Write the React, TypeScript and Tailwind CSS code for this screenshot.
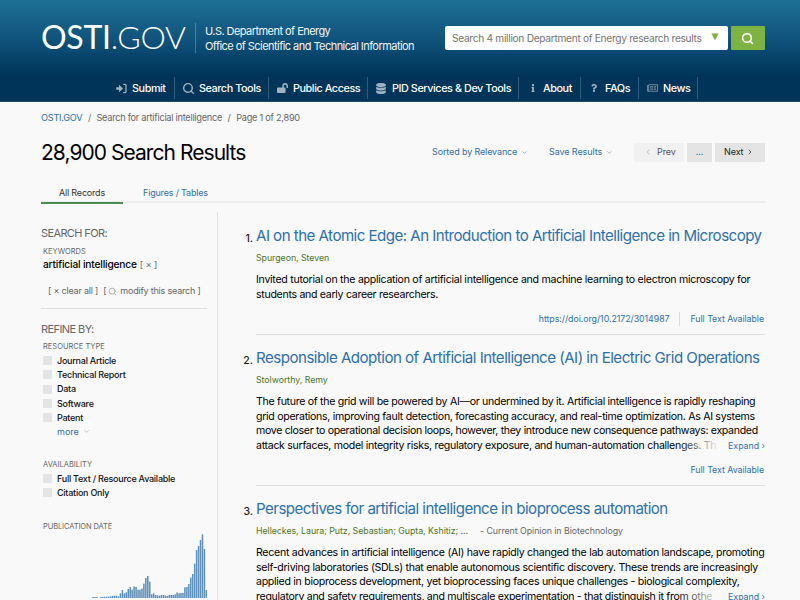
import React from 'react';
import { ChevronDown, ChevronLeft, ChevronRight, Search } from 'lucide-react';
import { FaDatabase, FaInfo, FaLockOpen, FaQuestion, FaRegNewspaper } from 'react-icons/fa';

interface Result {
  title: string;
  titleClass: string;
  authors: string;
  journal?: string;
  lines: { text: string; className: string }[];
  expand?: boolean;
  doi?: string;
}

const results: Result[] = [
  {
    title: 'AI on the Atomic Edge: An Introduction to Artificial Intelligence in Microscopy',
    titleClass: 'tracking-[-0.53px]',
    authors: 'Spurgeon, Steven',
    lines: [
      { text: 'Invited tutorial on the application of artificial intelligence and machine learning to electron microscopy for', className: 'tracking-[-0.28px]' },
      { text: 'students and early career researchers.', className: 'tracking-[-0.31px]' },
    ],
    doi: 'https://doi.org/10.2172/3014987',
  },
  {
    title: 'Responsible Adoption of Artificial Intelligence (AI) in Electric Grid Operations',
    titleClass: 'tracking-[-0.51px]',
    authors: 'Stolworthy, Remy',
    lines: [
      { text: 'The future of the grid will be powered by AI—or undermined by it. Artificial intelligence is rapidly reshaping', className: 'tracking-[-0.31px]' },
      { text: 'grid operations, improving fault detection, forecasting accuracy, and real-time optimization. As AI systems', className: 'tracking-[-0.3px]' },
      { text: 'move closer to operational decision loops, however, they introduce new consequence pathways: expanded', className: 'tracking-[-0.34px]' },
      { text: 'attack surfaces, model integrity risks, regulatory exposure, and human-automation challenges. Th', className: 'tracking-[-0.31px]' },
    ],
    expand: true,
  },
  {
    title: 'Perspectives for artificial intelligence in bioprocess automation',
    titleClass: 'tracking-[-0.54px]',
    authors: 'Helleckes, Laura; Putz, Sebastian; Gupta, Kshitiz; ...',
    journal: '- Current Opinion in Biotechnology',
    lines: [
      { text: 'Recent advances in artificial intelligence (AI) have rapidly changed the lab automation landscape, promoting', className: 'tracking-[-0.29px]' },
      { text: 'self-driving laboratories (SDLs) that enable autonomous scientific discovery. These trends are increasingly', className: 'tracking-[-0.3px]' },
      { text: 'applied in bioprocess development, yet bioprocessing faces unique challenges - biological complexity,', className: 'tracking-[-0.3px]' },
      { text: 'regulatory and safety requirements, and multiscale experimentation - that distinguish it from othe', className: 'tracking-[-0.3px]' },
    ],
    expand: true,
  },
];

const resourceTypes = ['Journal Article', 'Technical Report', 'Data', 'Software', 'Patent'];

const publications = [
  3, 3, 3, 0, 3, 3, 4, 4, 4, 5, 6, 7, 7, 5, 14, 24, 14, 17, 27, 33, 25, 35, 33, 25, 25, 28, 43, 60, 66, 49,
  11, 14, 9, 8, 7, 9, 9, 7, 6, 9, 9, 9, 11, 16, 14, 15, 15, 32, 33, 42, 61, 72, 103, 144, 156, 174, 191, 147, 24,
];

const SubmitIcon = () => (
  <svg viewBox="0 0 12 12" className="h-[11px] w-[11px] shrink-0">
    <path d="M0.3 4.6h3V2L7.7 6 3.3 10V7.4h-3z" fill="currentColor" />
    <path d="M7.8 1.6h2.1a1 1 0 0 1 1 1v6.8a1 1 0 0 1-1 1H7.8" fill="none" stroke="currentColor" strokeWidth="1.4" />
  </svg>
);

const navItems = [
  { label: 'Submit', width: 'w-[67px]', icon: <SubmitIcon /> },
  { label: 'Search Tools', width: 'w-[94px]', icon: <Search className="-ml-[1px] h-[13px] w-[13px]" strokeWidth={2.6} /> },
  { label: 'Public Access', width: 'w-[99px]', icon: <FaLockOpen className="h-[10px] w-[11px]" /> },
  { label: 'PID Services & Dev Tools', width: 'w-[151px]', icon: <FaDatabase className="h-[11px] w-[10px]" /> },
  { label: 'About', width: 'w-[62px]', icon: <FaInfo className="ml-[1px] h-[8px] w-[10px]" /> },
  { label: 'FAQs', width: 'w-[58px]', icon: <FaQuestion className="h-[8px] w-[10px]" /> },
  { label: 'News', width: 'w-[59px]', icon: <FaRegNewspaper className="h-[10px] w-[11px] opacity-70" /> },
];

function Header() {
  return (
    <header className="h-[102px] shrink-0 border-b border-[#1f4c6e] bg-linear-to-b from-[#1e7095] via-[#10527a] via-40% to-[#003459] to-75%">
      <div className="flex h-[76px] items-center pl-[41px]">
        <div className="flex w-[154px] items-baseline pb-[2px] font-['Lato'] text-[32px] leading-[32px] tracking-[-0.25px] text-white">
          <span>OSTI</span>
          <span className="font-light">.GOV</span>
        </div>
        <div className="flex h-[30px] w-[250px] flex-col justify-center border-l border-white/25 pt-[1px] pl-[9px] text-[11px] leading-[15px] tracking-[-0.55px] text-[#f2f6f9]">
          <span>U.S. Department of Energy</span>
          <span>Office of Scientific and Technical Information</span>
        </div>
        <div className="flex h-[24px] w-[283px] items-center justify-between rounded-[2px] bg-white pr-[9px] pl-[7px] text-[10.2px] tracking-[-0.31px] text-[#757575]">
          <span className="pt-[1px]">Search 4 million Department of Energy research results</span>
          <svg viewBox="0 0 8 8" className="mb-[2px] h-[8px] w-[8px]">
            <path d="M0.4 0.5h7.2L4 7.5z" fill="#7cb342" />
          </svg>
        </div>
        <button className="ml-[3px] flex h-[24px] w-[34px] items-center justify-center rounded-[1px] bg-[#7cb342] pr-[2px] text-white">
          <Search className="h-[13px] w-[13px]" strokeWidth={3} />
        </button>
      </div>
      <nav className="flex h-[25px] pt-[1px] pl-[108px]">
        {navItems.map((item) => (
          <div key={item.label} className={`flex h-[22px] items-center border-r border-white/20 pl-[8px] text-[10.8px] font-medium tracking-[-0.42px] text-white ${item.width}`}>
            <span className="w-[16px] shrink-0 text-[#9fb2c2]">{item.icon}</span>
            <span className="pt-[2px]">{item.label}</span>
          </div>
        ))}
      </nav>
    </header>
  );
}

function Facet({ label }: { label: string }) {
  return (
    <div className="flex h-[14.25px] items-center pl-[2px] text-[9px] font-medium tracking-[-0.25px] text-[#111]">
      <span className="mr-[5px] h-[9px] w-[9px] bg-[#e4e4e4]" />
      <span>{label}</span>
    </div>
  );
}

function Sidebar() {
  return (
    <aside className="w-[177px] shrink-0 border-r border-[#e2e2e2] pr-[10px] text-[#666]">
      <h2 className="pt-[13px] text-[11px] leading-[16px] tracking-[-0.62px]">SEARCH FOR:</h2>
      <div className="mt-[5px] pl-[2px] text-[7.5px] leading-[12px]">KEYWORDS</div>
      <div className="-mt-[1px] pl-[2px] text-[10.2px] leading-[14px]">
        <span className="font-medium tracking-[-0.18px] text-black">artificial intelligence</span>
        <span className="ml-[3px] text-[9px]">[ × ]</span>
      </div>
      <div className="mt-[12px] flex items-center pl-[7px] text-[9px] leading-[14px] tracking-[-0.2px]">
        <span>[ × clear all ]</span>
        <span className="ml-[5px]">[</span>
        <Search className="mr-[3px] ml-[2px] h-[9px] w-[9px] text-[#999]" strokeWidth={2} />
        <span>modify this search ]</span>
      </div>
      <div className="mt-[10px] border-b border-[#ddd]" />
      <h2 className="pt-[12px] text-[11px] leading-[16px] tracking-[-0.58px]">REFINE BY:</h2>
      <div className="mt-[4px] pl-[2px] text-[7.5px] leading-[12px]">RESOURCE TYPE</div>
      <div className="mt-[0.5px]">
        {resourceTypes.map((type) => (
          <Facet key={type} label={type} />
        ))}
      </div>
      <div className="flex h-[14px] items-center gap-[4px] pl-[16px] text-[9px] text-[#2e70a9]">
        more <ChevronDown className="h-[7px] w-[7px] text-[#999]" />
      </div>
      <div className="mt-[20.5px] pl-[2px] text-[7.5px] leading-[12px]">AVAILABILITY</div>
      <div>
        <Facet label="Full Text / Resource Available" />
        <Facet label="Citation Only" />
      </div>
      <div className="mt-[21px] pl-[2px] text-[7.5px] leading-[12px] tracking-[-0.1px]">PUBLICATION DATE</div>
      <svg viewBox="0 0 345 195" className="ml-[51px] h-[65px] w-[115px]">
        {publications.map((count, i) => (
          <rect key={i} x={1 + i * 5.86} y={195 - count} width={4.6} height={count} fill="#5f90b9" />
        ))}
      </svg>
    </aside>
  );
}

function ResultItem({ result, index }: { result: Result; index: number }) {
  return (
    <article className="flex">
      <div className="w-[15px] shrink-0 pt-[4px] pr-[3px] text-right text-[10.5px] leading-[20px] font-medium text-[#222]">{index}.</div>
      <div className="w-[509px] whitespace-nowrap">
        <h3 className={`text-[15.1px] leading-[22px] text-[#2e70a9] ${result.titleClass}`}>{result.title}</h3>
        <div className="mt-[4px] text-[8.8px] leading-[14px] tracking-[-0.04px]">
          <span className="text-[#4b7626]">{result.authors}</span>
          {result.journal && <span className="ml-[12px] text-[#666]">{result.journal}</span>}
        </div>
        <div className="relative mt-[8px] text-[10.6px] leading-[14.5px] text-black">
          {result.lines.map((line) => (
            <div key={line.text} className={line.className}>{line.text}</div>
          ))}
          {result.expand && (
            <div className="absolute right-0 bottom-0 flex h-[14.5px] w-[88px] justify-end bg-linear-to-r from-[#f9f9f9]/0 to-[#f9f9f9] to-50% text-[8.8px] text-[#2e70a9]">
              Expand ›
            </div>
          )}
        </div>
        <div className="mt-[10px] flex h-[14px] items-center justify-end pr-[1px] text-[8.8px] tracking-[-0.04px] text-[#2e70a9]">
          {result.doi && <span className="mr-[11px] border-r border-[#ddd] pr-[9px]">{result.doi}</span>}
          <span>Full Text Available</span>
        </div>
        <div className="mt-[8px] mb-[12px] border-b border-[#ddd]" />
      </div>
    </article>
  );
}

export default function App() {
  return (
    <div className="flex h-[600px] w-[800px] flex-col overflow-hidden bg-[#f9f9f9] font-['Inter',sans-serif] whitespace-nowrap">
      <Header />
      <div className="mx-[41px] w-[724px]">
        <div className="flex h-[32px] items-center gap-[5.5px] text-[9.2px] tracking-[-0.26px] text-[#666]">
          <span className="text-[#2e70a9]">OSTI.GOV</span>
          <span>/</span>
          <span>Search for artificial intelligence</span>
          <span>/</span>
          <span>Page 1 of 2,890</span>
        </div>
        <div className="flex h-[36px] items-center">
          <h1 className="w-[391px] pt-[1px] text-[21px] tracking-[-0.95px] text-black">28,900 Search Results</h1>
          <div className="flex w-[117px] items-center gap-[4px] text-[9px] tracking-[-0.13px] text-[#2e70a9]">
            Sorted by Relevance <ChevronDown className="h-[7px] w-[7px] text-[#888]" />
          </div>
          <div className="flex w-[85px] items-center gap-[4px] text-[9px] tracking-[-0.1px] text-[#2e70a9]">
            Save Results <ChevronDown className="h-[7px] w-[7px] text-[#888]" />
          </div>
          <div className="flex h-[19px] gap-[3px] text-[9px] tracking-[-0.1px]">
            <span className="flex w-[50px] items-center gap-[5px] bg-[#f1f1f1] pl-[10px] text-[#555]">
              <ChevronLeft className="h-[8px] w-[8px] text-[#aaa]" /> Prev
            </span>
            <span className="flex w-[25px] items-center justify-center bg-[#e4e4e4] text-[#2e70a9]">...</span>
            <span className="flex w-[50px] items-center gap-[3px] bg-[#e4e4e4] pl-[9px] text-[#222]">
              Next <ChevronRight className="h-[8px] w-[8px]" />
            </span>
          </div>
        </div>
        <div className="mt-[13px] flex h-[20px] border-b-2 border-[#ececec] text-[9px] tracking-[-0.18px]">
          <span className="flex h-[21px] w-[82px] justify-center border-b-2 border-[#4d8b54] pt-[3px] text-[#333]">All Records</span>
          <span className="ml-[20px] pt-[3px] text-[#2e70a9]">Figures / Tables</span>
        </div>
        <div className="mt-[9px] flex">
          <Sidebar />
          <main className="pt-[13px] pl-[23px]">
            {results.map((result, i) => (
              <ResultItem key={result.title} result={result} index={i + 1} />
            ))}
          </main>
        </div>
      </div>
    </div>
  );
}
